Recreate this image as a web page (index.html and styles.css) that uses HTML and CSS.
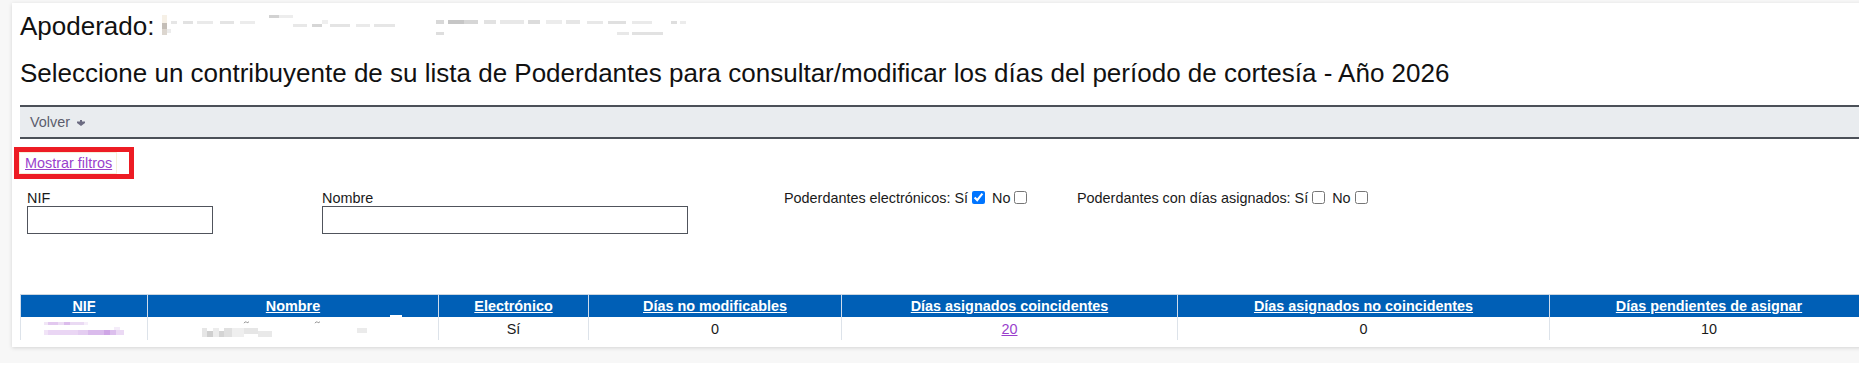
FILE: index.html
```html
<!DOCTYPE html>
<html lang="es">
<head>
<meta charset="utf-8">
<title>Poderdantes - Período de cortesía</title>
<link rel="stylesheet" href="styles.css">
</head>
<body>
<div class="page">
  <div class="card">
    <h1 class="title">Apoderado: <svg class="mosaic-name" width="540" height="24" viewBox="0 0 540 24" aria-hidden="true">
        <rect x="0" y="1" width="5" height="8" fill="#f6f0e6"/>
        <rect x="0" y="9" width="5" height="6" fill="#c4beb7"/>
        <rect x="0" y="15" width="5" height="6" fill="#dcd6cf"/>
        <rect x="5" y="15" width="4" height="4" fill="#ececec"/>
        <rect x="9" y="7" width="6" height="3" fill="#e6e6e6"/>
        <rect x="21" y="7" width="10" height="3" fill="#e2e2e2"/>
        <rect x="35" y="7" width="16" height="3" fill="#eaeaea"/>
        <rect x="58" y="7" width="14" height="3" fill="#e4e4e4"/>
        <rect x="78" y="7" width="15" height="3" fill="#ececec"/>
        <rect x="107" y="1" width="10" height="3" fill="#d2d2d2"/>
        <rect x="117" y="1" width="14" height="3" fill="#ededed"/>
        <rect x="131" y="10" width="14" height="3" fill="#e8e8e8"/>
        <rect x="150" y="10" width="10" height="3" fill="#d6d6d6"/>
        <rect x="160" y="6" width="6" height="4" fill="#efefef"/>
        <rect x="168" y="10" width="20" height="3" fill="#e4e4e4"/>
        <rect x="194" y="10" width="14" height="3" fill="#eaeaea"/>
        <rect x="212" y="10" width="21" height="3" fill="#e6e6e6"/>
        <rect x="274" y="6" width="8" height="4" fill="#d8d8d8"/>
        <rect x="286" y="6" width="16" height="4" fill="#c6c6c6"/>
        <rect x="302" y="6" width="14" height="4" fill="#d6d6d6"/>
        <rect x="322" y="6" width="12" height="4" fill="#e2e2e2"/>
        <rect x="338" y="6" width="24" height="4" fill="#e8e8e8"/>
        <rect x="366" y="6" width="12" height="4" fill="#dcdcdc"/>
        <rect x="384" y="6" width="16" height="4" fill="#ececec"/>
        <rect x="404" y="6" width="14" height="4" fill="#e6e6e6"/>
        <rect x="274" y="18" width="8" height="3" fill="#dedede"/>
        <rect x="425" y="7" width="16" height="3" fill="#e8e8e8"/>
        <rect x="446" y="7" width="18" height="3" fill="#e0e0e0"/>
        <rect x="470" y="7" width="20" height="3" fill="#eaeaea"/>
        <rect x="455" y="18" width="12" height="3" fill="#e8e8e8"/>
        <rect x="470" y="18" width="31" height="3" fill="#e2e2e2"/>
        <rect x="509" y="7" width="6" height="3" fill="#dedede"/>
        <rect x="518" y="7" width="6" height="3" fill="#ececec"/>
      </svg></h1>
    <h2 class="subtitle">Seleccione un contribuyente de su lista de Poderdantes para consultar/modificar los días del período de cortesía - Año 2026</h2>

    <div class="toolbar">
      <a class="toolbar-link" href="#"><span>Volver</span><svg class="caret" width="8" height="6" viewBox="0 0 8 6" aria-hidden="true"><path d="M3 0H5V1.6H8V2.9L4 6L0 2.9V1.6H3Z"/></svg></a>
    </div>

    <div class="toggle-row">
      <span class="annotation"><span class="focus-ring"><a class="link-visited" href="#">Mostrar filtros</a></span></span>
    </div>

    <div class="filters">
      <label class="field field-nif"><span class="field-label">NIF</span><input class="text-input input-nif" type="text"></label>
      <label class="field field-nombre"><span class="field-label">Nombre</span><input class="text-input input-nombre" type="text"></label>
      <div class="check-group group-electronicos">Poderdantes electrónicos: Sí<input type="checkbox" checked> No<input type="checkbox"></div>
      <div class="check-group">Poderdantes con días asignados: Sí<input type="checkbox"> No<input type="checkbox"></div>
    </div>

    <table class="grid">
      <colgroup>
        <col class="c-nif"><col class="c-nombre"><col class="c-elec"><col class="c-nomod"><col class="c-coin"><col class="c-nocoin"><col class="c-pend">
      </colgroup>
      <thead>
        <tr>
          <th><a href="#">NIF</a></th>
          <th><a href="#">Nombre</a></th>
          <th><a href="#">Electrónico</a></th>
          <th><a href="#">Días no modificables</a></th>
          <th><a href="#">Días asignados coincidentes</a></th>
          <th><a href="#">Días asignados no coincidentes</a></th>
          <th><a href="#">Días pendientes de asignar</a></th>
        </tr>
      </thead>
      <tbody>
        <tr>
          <td class="cell-mosaic"><svg class="mosaic-nif" width="82" height="14" viewBox="0 0 82 14" aria-hidden="true">
              <rect x="0" y="0" width="4" height="3" fill="#f1e6f6"/>
              <rect x="4" y="0" width="10" height="3" fill="#e2c8ef"/>
              <rect x="14" y="0" width="10" height="3" fill="#ecdcf4"/>
              <rect x="20" y="0" width="6" height="3" fill="#dcbdec"/>
              <rect x="26" y="0" width="14" height="3" fill="#eadaf3"/>
              <rect x="40" y="0" width="4" height="3" fill="#f6eefa"/>
              <rect x="0" y="8" width="4" height="5" fill="#f1e4f7"/>
              <rect x="4" y="8" width="30" height="5" fill="#ead6f4"/>
              <rect x="34" y="8" width="10" height="5" fill="#e4cdf1"/>
              <rect x="44" y="8" width="16" height="5" fill="#dabbec"/>
              <rect x="60" y="8" width="6" height="5" fill="#cfa6e6"/>
              <rect x="66" y="8" width="6" height="5" fill="#dcbfed"/>
              <rect x="70" y="5" width="6" height="3" fill="#f4ecf9"/>
              <rect x="72" y="8" width="8" height="5" fill="#ebd9f4"/>
            </svg></td>
          <td class="cell-mosaic cell-nombre"><span class="mask"></span><svg class="mosaic-nombre" width="170" height="17" viewBox="0 0 170 17" aria-hidden="true">
              <path d="M42 2.2 Q43 0 44.5 1.2 T47 0.6" stroke="#8a8a8a" stroke-width="0.9" fill="none"/>
              <path d="M113 2.2 Q114 0 115.5 1.2 T118 0.6" stroke="#8a8a8a" stroke-width="0.9" fill="none"/>
              <rect x="0" y="7" width="5" height="9" fill="#e6e6e6"/>
              <rect x="5" y="10" width="6" height="6" fill="#cfcfcf"/>
              <rect x="11" y="7" width="6" height="9" fill="#ececec"/>
              <rect x="17" y="10" width="5" height="6" fill="#d4d4d4"/>
              <rect x="22" y="7" width="8" height="9" fill="#e0e0e0"/>
              <rect x="30" y="7" width="12" height="9" fill="#efefef"/>
              <rect x="42" y="7" width="14" height="6" fill="#e6e6e6"/>
              <rect x="56" y="10" width="14" height="6" fill="#e9e9e9"/>
              <rect x="155" y="7" width="10" height="5" fill="#ebebeb"/>
            </svg></td>
          <td>Sí</td>
          <td>0</td>
          <td><a class="link-visited" href="#">20</a></td>
          <td>0</td>
          <td>10</td>
        </tr>
      </tbody>
    </table>
  </div>
</div>
</body>
</html>
```

FILE: styles.css
```css
html, body {
  margin: 0;
  padding: 0;
  background: #ffffff;
}

body {
  font-family: "Liberation Sans", Arial, sans-serif;
  font-size: 14.4px;
  color: #1a1a1a;
}

.page {
  background: #f7f7f7;
  padding: 3px 0 16px 12px;
  overflow: hidden;
}

.card {
  width: 1866px;
  box-sizing: border-box;
  background: #ffffff;
  padding: 8px 9px 7px 8px;
  box-shadow: 0 1px 4px rgba(0, 0, 0, 0.14);
}

.title {
  margin: 0;
  font-size: 26px;
  line-height: 30px;
  font-weight: normal;
  color: #111111;
  white-space: nowrap;
}

.mosaic-name {
  vertical-align: -3px;
}

.subtitle {
  margin: 17px 0 0;
  font-size: 26px;
  line-height: 30px;
  font-weight: normal;
  color: #111111;
  white-space: nowrap;
}

.toolbar {
  margin-top: 17px;
  height: 30px;
  background: #e9ecef;
  border-top: 2px solid #4b5058;
  border-bottom: 2px solid #4b5058;
  display: flex;
  align-items: center;
  padding-left: 10px;
}

.toolbar-link {
  color: #5b5c6c;
  text-decoration: none;
  line-height: 16px;
  display: flex;
  align-items: center;
  gap: 7px;
}

.caret {
  fill: #6c6c82;
  margin-top: 1px;
}

.toggle-row {
  margin-top: 8px;
  margin-left: -6px;
  height: 32px;
}

.annotation {
  display: inline-block;
  box-sizing: border-box;
  width: 120px;
  height: 32px;
  border: 5px solid #ed1c24;
}

.focus-ring {
  display: inline-block;
  height: 22px;
  box-sizing: border-box;
  border: 1px solid #f6efd8;
  padding: 0 4px 0 5px;
  line-height: 20px;
}

.link-visited {
  color: #9a3fcc;
  text-decoration: underline;
}

.filters {
  margin-top: 11px;
  display: flex;
  align-items: flex-start;
}

.field {
  display: flex;
  flex-direction: column;
}

.field-label {
  line-height: 16px;
  color: #1a1a1a;
}

.field-nif {
  margin-left: 7px;
  width: 295px;
}

.field-nombre {
  width: 462px;
}

.text-input {
  box-sizing: border-box;
  height: 28px;
  margin: 0;
  border: 1px solid #50545c;
  border-radius: 0;
  background: #ffffff;
  padding: 2px 4px;
  font: inherit;
}

.input-nif {
  width: 186px;
}

.input-nombre {
  width: 366px;
}

.check-group {
  line-height: 16px;
  white-space: nowrap;
  color: #1a1a1a;
}

.check-group input {
  width: 13px;
  height: 13px;
  margin: 0 3px 0 4px;
  vertical-align: -1px;
}

.group-electronicos {
  width: 293px;
}

.grid {
  margin-top: 60px;
  table-layout: fixed;
  width: 1848px;
  border-collapse: collapse;
}

.c-nif { width: 127px; }
.c-nombre { width: 291px; }
.c-elec { width: 150px; }
.c-nomod { width: 253px; }
.c-coin { width: 336px; }
.c-nocoin { width: 372px; }
.c-pend { width: 319px; }

.grid th {
  background: #005fb6;
  height: 22px;
  padding: 0 4px;
  line-height: 16px;
  font-weight: bold;
  text-align: center;
  border-top: 1px solid #ccd6e0;
  border-left: 1px solid #cfdcec;
  border-right: 1px solid #cfdcec;
  white-space: nowrap;
}

.grid th a {
  color: #ffffff;
  text-decoration: underline;
}

.grid td {
  height: 23px;
  box-sizing: border-box;
  padding: 4px 4px 3px;
  line-height: 16px;
  text-align: center;
  color: #1a1a1a;
  border-left: 1px solid #dde3ea;
  border-right: 1px solid #dde3ea;
}

.cell-mosaic {
  text-align: left;
  vertical-align: top;
}

.grid td.cell-mosaic {
  padding: 0;
  position: relative;
}

.mosaic-nif {
  display: block;
  margin: 5px 0 0 23px;
}

.mosaic-nombre {
  display: block;
  margin: 4px 0 0 54px;
}

.mask {
  position: absolute;
  left: 242px;
  top: -2px;
  width: 12px;
  height: 5px;
  background: #ffffff;
}
```
